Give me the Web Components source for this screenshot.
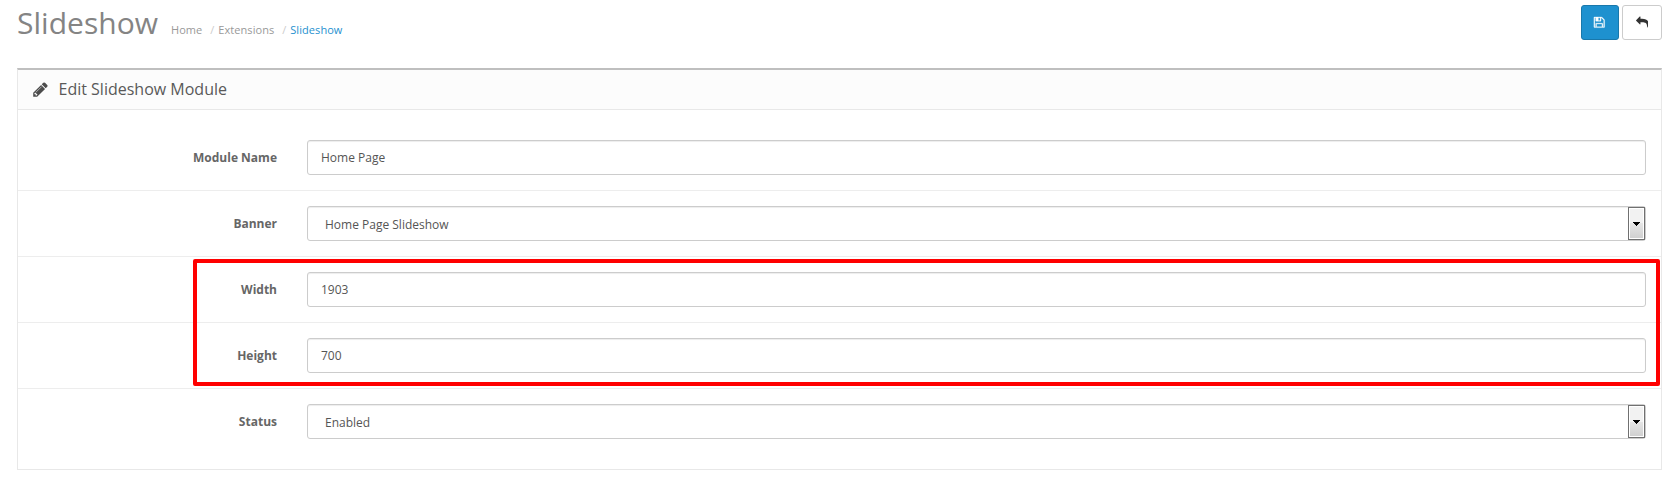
<!DOCTYPE html>
<html lang="en"><head><meta charset="utf-8"><title>Slideshow</title>
<style>body{margin:0;background:#fff;font:12px/17px "Open Sans",sans-serif;color:#666}</style></head>
<body><module-page></module-page>
<script>
const define=(name,html)=>customElements.define(name,class extends HTMLElement{
  connectedCallback(){
    if(this.shadowRoot)return;
    const t=document.createElement('template');
    t.innerHTML=typeof html==='function'?html(this):html;
    this.attachShadow({mode:'open'}).append(t.content.cloneNode(true));
  }
});
const icons={
  save:'<path stroke="currentColor" stroke-width="40" d="M512 1536h768v-384h-768v384zm896 0h128v-896q0-14-10-38.500t-20-34.500l-281-281q-10-10-34-20t-39-10v416q0 40-28 68t-68 28h-576q-40 0-68-28t-28-68v-416h-128v1280h128v-416q0-40 28-68t68-28h832q40 0 68 28t28 68v416zm-384-928v-320q0-13-9.500-22.500t-22.500-9.500h-192q-13 0-22.500 9.500t-9.500 22.500v320q0 13 9.500 22.500t22.500 9.500h192q13 0 22.500-9.500t9.500-22.500zm640 32v928q0 40-28 68t-68 28h-1344q-40 0-68-28t-28-68v-1344q0-40 28-68t68-28h928q40 0 88 20t76 48l280 280q28 28 48 76t20 88z"/>',
  reply:'<path transform="translate(1792 0) scale(-1 1)" d="M1792 640q0 26-19 45l-512 512q-19 19-45 19t-45-19-19-45v-256h-224q-98 0-175.500 6t-154 21.500-133 42.500-105.500 69.500-80 101-48.500 138.500-17.500 181q0 55 5 123 0 6 2.500 23.500t2.500 26.500q0 15-8.500 25t-23.500 10q-16 0-28-17-7-9-13-22t-13.500-30-10.500-24q-127-285-127-451 0-199 53-333 162-403 875-403h224v-256q0-26 19-45t45-19 45 19l512 512q19 19 19 45z"/>',
  pencil:'<path d="M491 1536l91-91-235-235-91 91v107h128v128h107zm523-928q0-22-22-22-10 0-17 7l-542 542q-7 7-7 17 0 22 22 22 10 0 17-7l542-542q7-7 7-17zm-54-192l416 416-832 832h-416v-416zm683 96q0 53-37 90l-166 166-416-416 166-165q36-38 90-38 53 0 91 38l235 234q37 39 37 91z"/>'
};
define('fa-icon',el=>`<style>:host{display:block;flex:none;width:12px;height:12px}svg{display:block;width:100%;height:100%;fill:currentColor}</style><svg viewBox="0 0 1792 1792">${icons[el.getAttribute('name')]}</svg>`);
define('icon-button',`<style>:host{display:flex;align-items:center;justify-content:center;box-sizing:border-box;width:40px;height:35px;border:1px solid #ccc;border-radius:3px;background:#fff;color:#333}
:host([primary]){width:38px;background:#1e91cf;border-color:#1978ab;color:#fff}</style><slot></slot>`);
define('bread-crumb',`<style>:host{display:flex;font-size:11px;line-height:17px;color:#999;letter-spacing:.06px}::slotted(*){white-space:nowrap}</style><slot></slot>`);
define('bread-item',`<style>:host{display:flex}:host([current]){color:#1e91cf}.sep{width:8px;color:#ccc;margin-left:8px}:host([first]) .sep{display:none}</style><span class="sep">/</span><slot></slot>`);
define('page-header',`<style>:host{display:flex;height:68px;padding:0 10px 0 17px;box-sizing:border-box}
h1{margin:6px 0 0;font-size:30px;line-height:33px;font-weight:400;color:#848484;width:154px;letter-spacing:.04px}
bread-crumb{margin-top:21px}.actions{margin:5px 0 0 auto;display:flex;gap:3px}
fa-icon{width:12.5px;height:12.5px}fa-icon[name=save]{margin-right:1px}</style>
<h1>Slideshow</h1>
<bread-crumb><bread-item first>Home</bread-item><bread-item>Extensions</bread-item><bread-item current>Slideshow</bread-item></bread-crumb>
<div class="actions"><icon-button primary><fa-icon name="save"></fa-icon></icon-button><icon-button><fa-icon name="reply"></fa-icon></icon-button></div>`);
define('edit-panel',`<style>:host{display:block;box-sizing:border-box;margin:0 10px 0 17px;border:1px solid #e8e8e8;border-top:2px solid #bfbfbf;box-shadow:0 1px 0 #f1f1f1}
header{display:flex;align-items:center;height:39px;background:#fcfcfc;border-bottom:1px solid #e8e8e8}
fa-icon{width:17px;height:17px;margin-left:13.5px;color:#4c4c4c}h3{margin:0 0 2px 10px;font-size:16px;font-weight:400;line-height:22px;color:#595959}
.body{padding:15px 0;position:relative}</style>
<header><fa-icon name="pencil"></fa-icon><h3>Edit Slideshow Module</h3></header><div class="body"><slot></slot></div>`);
define('form-row',el=>`<style>:host{display:flex;padding:15px 15px 15px 0;border-top:1px solid #ededed}:host([first]){border-top-color:transparent;margin-top:-1px}
.label{width:259px;margin-right:30px;padding-top:9px;text-align:right;font-weight:700;color:#666}::slotted(*){flex:1}</style>
<div class="label">${el.getAttribute('label')}</div><slot></slot>`);
define('text-field',`<style>:host{display:block;box-sizing:border-box;height:35px;padding:8px 13px;border:1px solid #ccc;border-radius:3px;color:#555;box-shadow:inset 0 1px 1px rgba(0,0,0,.075)}</style><slot></slot>`);
define('select-field',`<style>:host{display:flex;box-sizing:border-box;height:35px;border:1px solid #ccc;border-radius:3px;color:#555;box-shadow:inset 0 1px 1px rgba(0,0,0,.075)}
.value{flex:1;padding:9px 17px 0}.arrow{box-sizing:border-box;width:17px;height:33px;border:1px solid #707070;box-shadow:inset 0 0 0 1px #fff;background:linear-gradient(#f2f2f2 0 50%,#e6e6e6 50%,#cfcfcf);display:grid;place-items:center}
svg{display:block}</style><div class="value"><slot></slot></div><div class="arrow"><svg width="7" height="4" shape-rendering="crispEdges"><path d="M0 0H7V1H6V2H5V3H4V4H3V3H2V2H1V1H0z"/></svg></div>`);
define('highlight-box',`<style>:host{position:absolute;left:175px;right:1px;top:149px;height:127px;box-sizing:border-box;border:4px solid #f00;border-radius:2px;pointer-events:none}</style>`);
define('module-page',`<style>:host{display:block}</style><page-header></page-header><edit-panel>
<form-row first label="Module Name"><text-field>Home Page</text-field></form-row>
<form-row label="Banner"><select-field>Home Page Slideshow</select-field></form-row>
<form-row label="Width"><text-field>1903</text-field></form-row>
<form-row label="Height"><text-field>700</text-field></form-row>
<form-row label="Status"><select-field>Enabled</select-field></form-row>
<highlight-box></highlight-box></edit-panel>`);
</script></body></html>
